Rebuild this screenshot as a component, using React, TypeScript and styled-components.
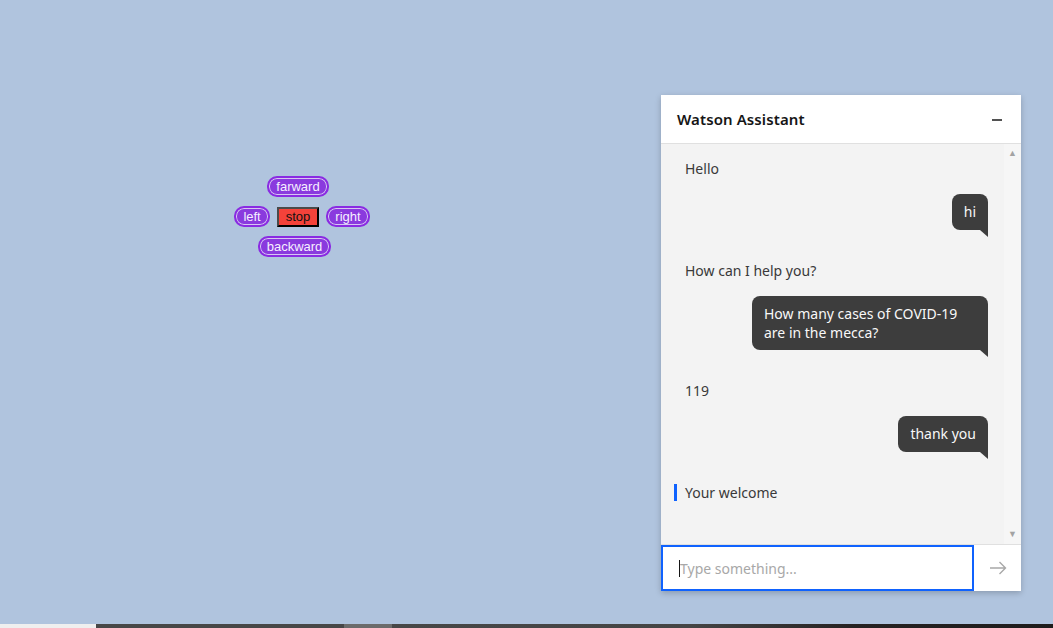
import React from 'react';
import styled, {createGlobalStyle} from "styled-components";

const GlobalStyle = createGlobalStyle`
  html, body {
    margin: 0;
    padding: 0;
  }
  body {
    background: #b0c4de;
    font-family: "Liberation Sans", Arial, sans-serif;
  }
`

type Msg = { from: 'bot' | 'user'; text: string; focus?: boolean };

const messages: Msg[] = [
    {from: 'bot', text: 'Hello'},
    {from: 'user', text: 'hi'},
    {from: 'bot', text: 'How can I help you?'},
    {from: 'user', text: 'How many cases of COVID-19 are in the mecca?'},
    {from: 'bot', text: '119'},
    {from: 'user', text: 'thank you'},
    {from: 'bot', text: 'Your welcome', focus: true},
];

export default function App() {
    return (
        <Page>
            <GlobalStyle/>
            <Stage>
                <Controls>
                    <Row $shift={8}>
                        <PillButton>farward</PillButton>
                    </Row>
                    <Row>
                        <PillButton>left</PillButton>
                        <StopButton>stop</StopButton>
                        <PillButton>right</PillButton>
                    </Row>
                    <Row $shift={15}>
                        <PillButton>backward</PillButton>
                    </Row>
                </Controls>

                <ChatPanel>
                    <Header>
                        <Title>Watson Assistant</Title>
                        <Minimize aria-label="minimize"/>
                    </Header>

                    <Body>
                        <MessageList>
                            {messages.map((m, i) => m.from === 'bot' ? (
                                <BotLine key={i} $first={i === 0} $focus={m.focus}>{m.text}</BotLine>
                            ) : (
                                <UserLine key={i}>
                                    <Bubble>{m.text}</Bubble>
                                </UserLine>
                            ))}
                        </MessageList>
                        <ScrollTrack>
                            <Arrow>&#9650;</Arrow>
                            <Arrow>&#9660;</Arrow>
                        </ScrollTrack>
                    </Body>

                    <InputBar>
                        <InputBox>
                            <Caret/>
                            <Input placeholder="Type something..."/>
                        </InputBox>
                        <SendButton aria-label="send">
                            <svg width="18" height="14" viewBox="0 0 18 14" fill="none">
                                <path d="M1 7h15.5M10.5 1l6 6-6 6" stroke="#a8a8a8" strokeWidth="1.4"/>
                            </svg>
                        </SendButton>
                    </InputBar>
                </ChatPanel>
            </Stage>
            <TaskStrip>
                <StripPart $w={96} $bg="#efefef"/>
                <StripPart $w={248} $bg="#474747"/>
                <StripPart $w={48} $bg="#6b6b6b"/>
                <StripPart $bg="linear-gradient(90deg, #474747 0%, #454545 45%, #262222 70%, #1e1c1c 100%)"/>
            </TaskStrip>
        </Page>
    );
}

const Page = styled.div`
  width: 100%;
  height: 628px;
  display: flex;
  flex-direction: column;
  overflow: hidden;
`

const Stage = styled.main`
  flex: 1;
  display: flex;
  align-items: flex-start;
  background: #b0c4de;
`

const Controls = styled.div`
  width: 604px;
  padding-top: 176px;
  display: flex;
  flex-direction: column;
  align-items: center;
  gap: 9px;
`

const Row = styled.div<{ $shift?: number }>`
  display: flex;
  align-items: center;
  gap: 7px;
  height: 21px;
  margin-right: ${p => p.$shift || 0}px;
`

const PillButton = styled.button`
  font-family: "Liberation Sans", Arial, sans-serif;
  font-size: 13px;
  line-height: 13px;
  color: #f6f0ff;
  background: #8a3ade;
  border: 2px solid #8a2be2;
  box-shadow: inset 0 0 0 1px #d6c6f3;
  border-radius: 10px;
  padding: 2px 7px;
  height: 21px;
  cursor: pointer;
`

const StopButton = styled.button`
  font-family: "Liberation Sans", Arial, sans-serif;
  font-size: 13px;
  line-height: 14px;
  color: #111;
  background: #f4423a;
  border: 2px outset #4a4a4a;
  border-radius: 0;
  padding: 1px 7px;
  height: 20px;
  cursor: pointer;
`

const ChatPanel = styled.section`
  margin-left: 57px;
  margin-top: 95px;
  width: 360px;
  height: 496px;
  display: flex;
  flex-direction: column;
  background: #fff;
  box-shadow: 0 2px 6px rgba(0, 0, 0, 0.22);
  font-family: "Noto Sans", "Open Sans", sans-serif;
`

const Header = styled.header`
  height: 48px;
  flex-shrink: 0;
  display: flex;
  align-items: center;
  justify-content: space-between;
  padding: 0 19px 0 16px;
  border-bottom: 1px solid #e0e0e0;
  background: #fff;
`

const Title = styled.h2`
  margin: 0;
  font-size: 15px;
  font-weight: 600;
  color: #161616;
  letter-spacing: 0.1px;
`

const Minimize = styled.span`
  width: 10px;
  height: 2px;
  background: #525252;
  margin-top: 1px;
`

const Body = styled.div`
  flex: 1;
  display: flex;
  background: #f3f3f3;
  min-height: 0;
`

const MessageList = styled.div`
  flex: 1;
  display: flex;
  flex-direction: column;
  padding: 0 16px 0 24px;
`

const BotLine = styled.div<{ $first?: boolean; $focus?: boolean }>`
  margin-top: ${p => p.$first ? 15 : 31}px;
  font-size: 14px;
  line-height: 20px;
  color: #393939;
  position: relative;

  &::before {
    content: "";
    display: ${p => p.$focus ? 'block' : 'none'};
    position: absolute;
    left: -11px;
    top: 1px;
    width: 3px;
    height: 17px;
    background: #0f62fe;
  }
`

const UserLine = styled.div`
  margin-top: 15px;
  display: flex;
  justify-content: flex-end;
`

const Bubble = styled.div`
  position: relative;
  box-sizing: border-box;
  min-height: 36px;
  max-width: 236px;
  padding: 8px 12px;
  background: #3d3d3d;
  color: #f8f8f8;
  font-size: 14px;
  line-height: 19px;
  border-radius: 8px 8px 0 8px;

  &::after {
    content: "";
    position: absolute;
    right: 0;
    top: 100%;
    border-top: 7px solid #3d3d3d;
    border-left: 8px solid transparent;
  }
`

const ScrollTrack = styled.div`
  width: 17px;
  display: flex;
  flex-direction: column;
  justify-content: space-between;
  align-items: center;
  background: #f6f6f6;
  padding: 4px 0 6px;
`

const Arrow = styled.span`
  font-size: 9px;
  line-height: 9px;
  color: #a3a3a3;
`

const InputBar = styled.div`
  height: 46px;
  flex-shrink: 0;
  display: flex;
  border-top: 1px solid #e0e0e0;
  background: #fff;
`

const InputBox = styled.div`
  flex: 1;
  display: flex;
  align-items: center;
  border: 2px solid #0f62fe;
  padding-left: 16px;
  background: #fff;
`

const Caret = styled.span`
  width: 1px;
  height: 17px;
  background: #161616;
`

const Input = styled.input`
  flex: 1;
  border: none;
  outline: none;
  background: transparent;
  padding: 0;
  font-family: "Noto Sans", "Open Sans", sans-serif;
  font-size: 14px;
  color: #161616;

  &::placeholder {
    color: #a8a8a8;
  }
`

const SendButton = styled.button`
  width: 47px;
  border: none;
  background: #fff;
  display: flex;
  align-items: center;
  justify-content: center;
  padding: 0;
  cursor: pointer;
`

const TaskStrip = styled.footer`
  height: 4px;
  display: flex;
  flex-shrink: 0;
`

const StripPart = styled.div<{ $w?: number; $bg: string }>`
  width: ${p => p.$w ? `${p.$w}px` : 'auto'};
  flex: ${p => p.$w ? 'none' : 1};
  background: ${p => p.$bg};
`
